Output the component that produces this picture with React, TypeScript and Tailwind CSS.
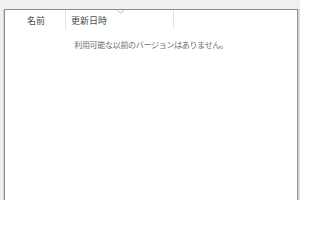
import React from "react";

export default function App() {
  const font = { fontFamily: '"Noto Sans CJK JP", "Noto Sans", sans-serif' };
  return (
    <div className="w-[300px] h-[200px] bg-[#f0f0f0] pt-[9px] overflow-hidden" style={font}>
      <div className="flex h-[191px]">
        <div className="w-[3px] shrink-0" />
        <div className="w-[1px] shrink-0 bg-[#cfcfcf] mt-[1px]" />
        <div className="flex-1 flex flex-col bg-white border-t border-l border-r border-[#8e8e8e]">
          <div className="flex h-[19px] items-stretch relative">
            <div className="w-[61px] flex items-center justify-center pt-[2px] pl-[2px] text-[9px] text-[#4d4d4d] border-r border-[#e3e3e3] leading-none">
              名前
            </div>
            <div className="w-[108px] flex items-center pt-[2px] pl-[5px] text-[9px] text-[#4d4d4d] border-r border-[#e3e3e3] leading-none relative">
              更新日時
              <svg className="absolute left-[51px] top-[0px]" width="7" height="4" viewBox="0 0 7 4">
                <path d="M0.5 0.5 L3.5 3.2 L6.5 0.5" fill="none" stroke="#a8a8a8" strokeWidth="0.9" />
              </svg>
            </div>
            <div className="flex-1" />
          </div>
          <div className="flex justify-center mt-[12px] text-[8px] tracking-[-0.3px] text-[#6d6d6d] leading-none">
            利用可能な以前のバージョンはありません。
          </div>
        </div>
        <div className="w-[2px] shrink-0 bg-[#d9d9d9]" />
      </div>
    </div>
  );
}
